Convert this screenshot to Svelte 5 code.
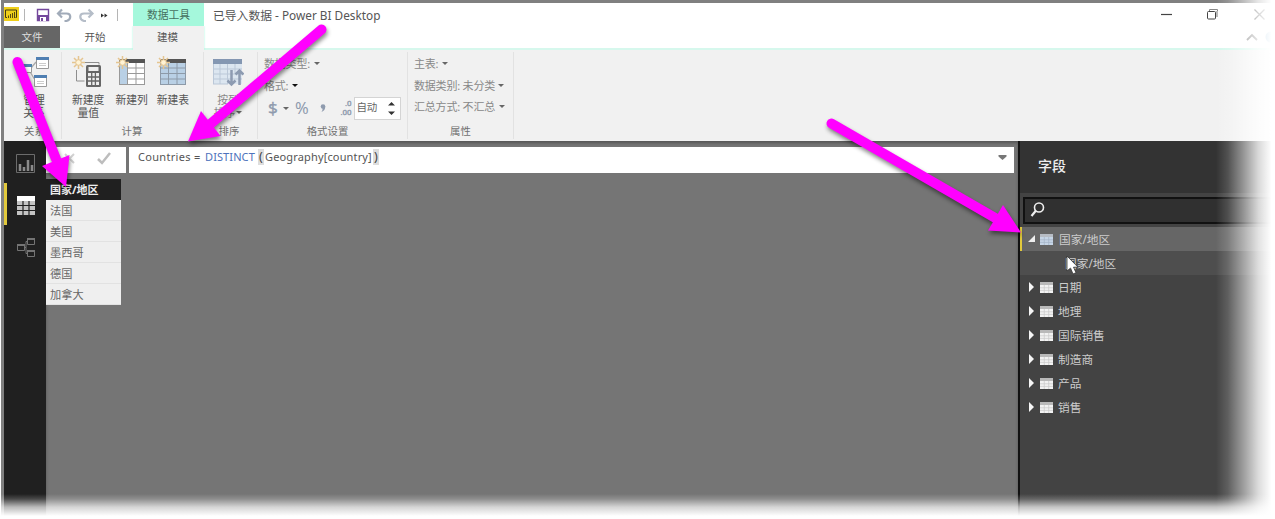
<script>
  const rows = ['法国', '美国', '墨西哥', '德国', '加拿大'];
  const tables = ['日期', '地理', '国际销售', '制造商', '产品', '销售'];
  const arrows = [
    { line: 'M17.500 62L56 159', head: '66,187 42,166 69.5,155' },
    { line: 'M321.5 29.5L208 126', head: '188,141.5 201,111 220.5,136' },
    { line: 'M831.5 123.5L997 219', head: '1021,232.5 1003,205 988,230.5' }
  ];
</script>

{#snippet star()}
  <path d="M6.5 0v13M0 6.5h13M2 2l9 9M11 2l-9 9" stroke="#e5c590" stroke-width="1.5" />
  <circle cx="6.5" cy="6.5" r="2.8" fill="#fff3d5" stroke="#e5c590" />
{/snippet}

{#snippet tableGlyph(tint)}
  <svg class="tbl" width="13" height="11" viewBox="0 0 13 11">
    <rect width="13" height="11" fill={tint ? '#c6d5e6' : '#f2f2f2'} />
    <rect width="13" height="3" fill={tint ? '#b7bcc4' : '#b9b9b9'} />
    <path d="M0 5.8h13M0 8.4h13M4.3 3v8M8.7 3v8" stroke={tint ? '#a4b3c5' : '#c9c9c9'} stroke-width=".7" />
  </svg>
{/snippet}

<div class="window">
  <header>
    <div class="quick">
      <svg width="116" height="23" viewBox="4 3 116 23" fill="none">
        <rect x="4" y="7" width="15" height="14" fill="#efcf1b" />
        <path d="M7 17.500H5.500v-7.500h11v7.500H15.500" stroke="#443b10" />
        <path d="M8.500 18v-2.500M10.500 18v-4M12.500 18v-5M14.500 18v-6" stroke="#443b10" stroke-width=".9" />
        <path d="M24.500 9v12M117.500 9v12" stroke="#b5b5b5" />
        <path d="M37.500 9.500h11v11h-11z" stroke="#74489d" stroke-width="1.4" />
        <path d="M37 15h12v6H37z" fill="#74489d" /><path d="M40 17h6v4h-6z" fill="#fff" /><path d="M41 18h2v3h-2z" fill="#74489d" />
        <path d="M62 9.500l-4 4 4 4M58.500 13.500h8c5 0 5 6 0 7.500h-2" stroke="#a1abb9" stroke-width="2.200" />
        <path d="M88.500 9.500l4 4-4 4M92 13.500h-8c-5 0-5 6 0 7.500h2" stroke="#b5bdc8" stroke-width="2.200" />
        <path d="M101 13.500l3 2-3 2zM104.500 13.500l3 2-3 2z" fill="#333" />
      </svg>
    </div>
    <div class="context">数据工具</div>
    <div class="title">已导入数据 - Power BI Desktop</div>
    <svg class="controls" width="112" height="46" viewBox="1155 3 112 46" fill="none">
      <path d="M1161 14.500h11" stroke="#444" stroke-width="1.2" />
      <path d="M1209.500 11v-1.500h8v7h-2" stroke="#888" /><path d="M1216 11h2v6h-2z" fill="#bbb" />
      <rect x="1207.500" y="11.500" width="8" height="7.500" rx="1" stroke="#444" fill="#fff" />
      <path d="M1254.500 9.500l10 10M1264.500 9.500l-10 10" stroke="#222" stroke-width="1.300" />
      <path d="M1247 40l5-5 5 5" stroke="#777" stroke-width="1.800" />
      <circle cx="1271" cy="37" r="5.500" fill="#4c98cc" />
    </svg>
  </header>
  <nav>
    <div class="file">文件</div>
    <div class="home">开始</div>
    <div class="modeling">建模</div>
  </nav>

  <section class="ribbon">
    <div class="group g1">
      <div class="tools">
        <div class="tool">
          <svg width="32" height="32" viewBox="18 56 32 32" fill="none">
            <path d="M26 68l5 0 5-6M29 70l6 10" stroke="#a9a9a9" stroke-width="1.3" />
            <g fill="#fff" stroke="#999"><path d="M36.500 57.500h12v11h-12zM22.500 64.500h9v8h-9zM34.500 75.500h12v11h-12z" /></g>
            <path d="M36 57h13v3H36zM22 64h10v3H22zM34 75h13v3H34z" fill="#4f7fb2" />
            <path d="M39 63.500h7M39 65.500h7M37 81.500h7M37 83.500h7" stroke="#ccc" />
          </svg>
          <span>管理<br />关系</span>
        </div>
      </div>
      <div class="caption">关系</div>
    </div>
    <div class="group g2">
      <div class="tools">
        <div class="tool measure">
          <svg width="32" height="32" viewBox="0 0 32 32" fill="none">
            {@render star()}
            <path d="M13 6.500h14v2M4.500 14v11h8" stroke="#8e8e8e" />
            <rect x="14" y="9" width="15" height="22" rx="1.500" fill="#666" />
            <path d="M16.500 11h10v4h-10z" fill="#eee" />
            <path d="M16 17h11v12H16z" fill="#efefef" />
            <path d="M16 21h11M16 25h11M19.700 17v12M23.400 17v12" stroke="#666" stroke-width="1.3" />
          </svg>
          <span>新建度<br />量值</span>
        </div>
        <div class="tool col">
          <svg width="32" height="32" viewBox="0 0 32 32" fill="none">
            <path d="M3 3h26v25H3z" fill="#fff" /><path d="M3 7h8v21H3z" fill="#b9d0e5" />
            <path d="M3 3h26v4H3z" fill="#555" />
            <path d="M3 28.500h26M11 12h18M11 17.500h18M11 23h18M11.500 7v21M20 7v21M28.500 7v21M3.500 7v21" stroke="#999" />
            {@render star()}
          </svg>
          <span>新建列</span>
        </div>
        <div class="tool tab">
          <svg width="32" height="32" viewBox="0 0 32 32" fill="none">
            <path d="M3 3h26v25H3z" fill="#b9d0e5" /><path d="M3 3h26v4H3z" fill="#555" />
            <path d="M3 28.500h26M3 12h26M3 17.500h26M3 23h26M11.500 7v21M20 7v21M28.500 7v21M3.500 7v21" stroke="#8d9aa8" />
            {@render star()}
          </svg>
          <span>新建表</span>
        </div>
      </div>
      <div class="caption">计算</div>
    </div>
    <div class="group g3">
      <div class="tools">
        <div class="tool">
          <svg width="32" height="32" viewBox="0 0 32 32" fill="none">
            <path d="M1 3h29v25H1z" fill="#dce6f0" /><path d="M1 3h29v5H1z" fill="#8497b2" />
            <path d="M1 13h29M1 18h29M1 23h29M1 28h15M8 8v20M15.500 8v20M23 8v10M1.500 8v20" stroke="#bbc8d8" />
            <path d="M19.500 14v14M15.500 24.500l4 4 4-4M27.500 29V15M23.500 18.500l4-4 4 4" stroke="#8d9bb1" stroke-width="2.5" />
          </svg>
          <span>按列<br />排序<i></i></span>
        </div>
      </div>
      <div class="caption">排序</div>
    </div>
    <div class="group g4">
      <div class="lines">
        <div>数据类型: <i></i></div>
        <div>格式: <i class="dark"></i></div>
        <div class="formats">
          <b class="dollar">$</b><i></i><b class="pct">%</b>
          <svg class="comma" width="6" height="9" viewBox="0 0 6 9"><circle cx="3" cy="2.500" r="2.300" fill="#8f9bae" /><path d="M5.300 2.500Q5.300 6.500 1.500 8q1.500-2 1-4z" fill="#8f9bae" /></svg>
          <span class="dec"><span>.0</span><span>.00</span></span>
          <span class="spin">自动
            <svg width="7" height="13" viewBox="0 0 7 13"><path d="M0 3.500L3.500 0 7 3.500zM0 9.500h7L3.500 13z" fill="#333" /></svg>
          </span>
        </div>
      </div>
      <div class="caption">格式设置</div>
    </div>
    <div class="group g5">
      <div class="lines">
        <div>主表: <i></i></div>
        <div>数据类别: 未分类<i class="gap"></i></div>
        <div>汇总方式: 不汇总 <i></i></div>
      </div>
      <div class="caption">属性</div>
    </div>
  </section>

  <main>
    <aside>
      <svg width="42" height="140" viewBox="4 141 42 140" fill="none">
        <path d="M4 183h3v42H4z" fill="#e2c93c" />
        <path d="M16.500 154.500h18v18h-18z" stroke="#6c6c6c" />
        <path d="M20 171v-7M24 171v-4M28 171v-11M32 171v-6" stroke="#8a8a8a" stroke-width="2.500" />
        <path d="M17 197h18v18H17z" fill="#c4c4c4" /><path d="M17 196h18v5H17z" fill="#fff" />
        <path d="M17 205.500h18M17 210.500h18M23 201v14M29 201v14" stroke="#202020" stroke-width="1.200" />
        <path d="M17.500 244.500h7v6h-7zM27.500 238.500h7v6h-7zM27.500 250.500h7v6h-7zM24.500 247.500h1.500v-6h1.500M26 247.500v6h1.500" stroke="#747474" />
        <path d="M17 244h8v2h-8zM27 238h8v2h-8zM27 250h8v2h-8z" fill="#747474" />
      </svg>
    </aside>
    <div class="work">
      <div class="formula">
        <div class="confirm">
          <svg width="80" height="26" viewBox="46 147 80 26" fill="none">
            <path d="M65 154l9 9M74 154l-9 9" stroke="#d2d2d2" stroke-width="2" />
            <path d="M98 159l4 4 8-10" stroke="#bdbdbd" stroke-width="2.500" />
          </svg>
        </div>
        <div class="expr">
          <span class="name">Countries =</span><span class="fn">DISTINCT</span><span class="paren">(</span><span class="arg">Geography[country]</span><span class="paren">)</span>
          <svg class="drop" width="9" height="6" viewBox="0 0 9 6"><path d="M.500 1h8v1.500L4.500 6 .500 2.500z" fill="#777" /></svg>
        </div>
      </div>
      <div class="grid">
        <div class="head">国家/地区</div>
        {#each rows as row}<div class="row">{row}</div>{/each}
      </div>
    </div>
    <div class="fields">
      <h2>字段</h2>
      <div class="search">
        <svg width="16" height="16" viewBox="0 0 16 16" fill="none" stroke="#eee"><circle cx="9" cy="5.500" r="4.500" stroke-width="1.600" /><path d="M6 8.500L1.500 14" stroke-width="2.200" /></svg>
      </div>
      <div class="item selected">
        <svg class="tri" width="8" height="8" viewBox="0 0 8 8"><path d="M7 0v7H0z" fill="#eee" /></svg>
        {@render tableGlyph(true)}<span>国家/地区</span>
      </div>
      <div class="item child"><span>国家/地区</span>
        <svg class="cursor" width="14" height="20" viewBox="0 0 14 20"><path d="M1 1v15l3.500-3 2.500 6 3-1.300-2.500-5.500H12z" fill="#fff" stroke="#333" stroke-width=".8" /></svg>
      </div>
      {#each tables as name}
        <div class="item">
          <svg class="tri" width="8" height="10" viewBox="0 0 8 10"><path d="M1 0L6 5l-5 5z" fill="#f5f5f5" /></svg>
          {@render tableGlyph(false)}<span>{name}</span>
        </div>
      {/each}
    </div>
  </main>

  <div class="fade right"></div>
  <div class="fade bottom"></div>
  <svg class="arrows" width="1275" height="519" viewBox="0 0 1275 519" fill="none">
    {#each arrows as a}
      <g><path d={a.line} stroke="#f0f" stroke-width="10" stroke-linecap="round" /><polygon points={a.head} fill="#f0f" /></g>
    {/each}
  </svg>
</div>

<style>
  :global(body) { background: #fff; overflow: hidden; }
  .window { box-sizing: border-box; position: relative; width: 1275px; height: 519px; overflow: hidden; display: flex; flex-direction: column; border-left: 1px solid #fff; padding: 3px 0 0 3px; background: #808080; font-family: "Noto Sans", "Noto Sans CJK SC", sans-serif; color: #555; }
  svg { display: block; flex: none; }
  header { height: 23px; display: flex; background: #fff; flex: none; }
  .quick { width: 129px; }
  .context { width: 71px; background: #a5f8dc; text-align: center; font-size: 10.8px; line-height: 23px; color: #46705f; }
  .title { margin-left: 9px; font-size: 11.8px; line-height: 25px; color: #555; flex: 1; white-space: nowrap; }
  .controls { margin-right: 8px; position: relative; overflow: visible; }
  nav { height: 24px; box-sizing: border-box; display: flex; background: #fff; border-bottom: 2px solid #d6f8ed; font-size: 10.5px; line-height: 22px; text-align: center; flex: none; }
  .file { width: 56px; background: #666; color: #ddd; }
  .home { width: 70px; margin-right: 3px; }
  .modeling { width: 69px; padding-right: 2px; height: 24px; background: #f1f1f1; box-shadow: 0 0 2px #a5f8dc; clip-path: inset(0 -3px 0 -3px); }
  .ribbon { height: 91px; display: flex; background: #f1f1f1; flex: none; }
  .group { box-sizing: border-box; height: 87px; margin-top: 2px; border-right: 1px solid #e2e2e2; display: flex; flex-direction: column; }
  .g1 { width: 58px; } .g2 { width: 142px; } .g3 { width: 54px; } .g4 { width: 150px; } .g5 { width: 106px; }
  .tools { display: flex; height: 72px; padding-top: 4px; box-sizing: border-box; }
  .tool { display: flex; flex-direction: column; align-items: center; font-size: 10.8px; line-height: 13px; text-align: center; white-space: nowrap; }
  .tool span { margin-top: 5px; }
  .g1 .tools { padding-left: 14px; } .g2 .tools { padding-left: 10px; gap: 11px; } .g3 .tools { padding-left: 8px; }
  .g2 .tab { margin-left: -2px; }
  .g3 .tool { color: #888; }
  .caption { font-size: 10.400px; line-height: 16px; text-align: center; color: #707070; }
  .g1 .caption { padding-left: 4px; } .g2 .caption { padding-right: 1px; } .g3 .caption { padding-right: 3px; } .g4 .caption { padding-right: 10px; }
  i { display: inline-block; width: 0; height: 0; border: 0 solid transparent; border-width: 3px 3px 0; border-top-color: #666; margin-left: 1px; vertical-align: 3px; flex: none; }
  i.dark { border-top-color: #111; }
  i.gap { margin-left: 3px; }
  .lines { height: 72px; padding: 1px 0 0 6px; box-sizing: border-box; font-size: 11px; line-height: 21.500px; color: #888; white-space: nowrap; letter-spacing: -.2px; }
  .formats { display: flex; align-items: center; height: 24px; }
  .formats b { font: 17px/20px "Noto Sans"; color: #8f9bae; }
  .dollar { width: 14px; padding-left: 4px; -webkit-text-stroke: .4px #8f9bae; } .formats .pct { margin-left: 6px; font-size: 16.500px; } .formats .comma { margin: 0 0 0 11px; }
  .dec { display: flex; flex-direction: column; align-items: flex-end; font: 8px/9.500px Roboto, sans-serif; width: 14px; margin-left: 12px; color: #8f9bae; letter-spacing: 0; -webkit-text-stroke: .4px #8f9bae; }
  .spin { box-sizing: border-box; width: 47px; height: 23px; margin-left: 2px; background: #fff; border: 1px solid #d4d4d4; display: flex; align-items: center; justify-content: space-between; padding: 0 5px 0 2px; color: #666; font-size: 10.500px; }
  main { flex: 1; display: flex; min-height: 0; }
  aside { width: 42px; background: #202020; flex: none; }
  .work { width: 972px; background: #757575; box-shadow: inset 0 2px 3px #555; flex: none; }
  .formula { display: flex; gap: 3px; padding-top: 6px; }
  .confirm { width: 80px; background: #fff; }
  .expr { width: 885px; height: 26px; box-sizing: border-box; background: #fff; display: flex; align-items: center; padding: 0 7px 6px 9px; font-size: 11px; line-height: 16px; white-space: nowrap; }
  .name { width: 67px; letter-spacing: .3px; } .fn { width: 53px; color: #4d72bc; letter-spacing: .1px; } .arg { width: 109px; padding-left: 1px; box-sizing: border-box; letter-spacing: .15px; }
  .paren { width: 6px; text-align: center; background: #ddd; font-size: 12.500px; color: #444; }
  .drop { margin-left: auto; }
  .grid { width: 75px; margin-top: 6px; font-size: 11.200px; line-height: 22px; color: #666; background: #efefef; }
  .head { height: 21px; padding-left: 4px; background: #202020; color: #eee; font-weight: 700; font-size: 11px; line-height: 21px; }
  .row { height: 21px; box-sizing: border-box; padding-left: 4px; border-bottom: 1px solid #e2e2e2; }
  .fields { flex: 1; background: #434343; border-left: 2px solid #111; }
  h2 { margin: 0; height: 52px; padding-left: 18px; background: #333; color: #eee; font-size: 14px; line-height: 50px; font-weight: 500; }
  .search { margin: 4px 0 3px 3px; height: 27px; box-sizing: border-box; border: 2px solid #111; background: #303030; padding: 3px 5px; }
  .item { height: 24px; display: flex; align-items: center; padding-left: 8px; color: #ccc; font-size: 11.700px; line-height: 24px; }
  .item span { margin-left: 5px; } .tbl { margin-left: 4px; }
  .selected { background: #666; border-left: 2px solid #e2c93c; padding-left: 6px; }
  .item.selected span { margin-left: 6px; }
  .child { background: #4e4e4e; position: relative; } .item.child span { margin-left: 37px; }
  .cursor { position: absolute; left: 46px; top: 4px; }
  .fade, .arrows { position: absolute; pointer-events: none; }
  .right { right: 0; top: 0; width: 59px; height: 519px; background: linear-gradient(to right, transparent, #ffffff26 20%, #ffffff80 48%, #ffffffd0 72%, #fff 94%); }
  .bottom { bottom: 0; left: 0; width: 1275px; height: 25px; background: linear-gradient(to bottom, transparent, #ffffff30 20%, #ffffffb0 52%, #fff 88%); }
  .arrows { left: -1px; top: 0; z-index: 2; filter: drop-shadow(1px 3px 2px #0007); }
</style>
